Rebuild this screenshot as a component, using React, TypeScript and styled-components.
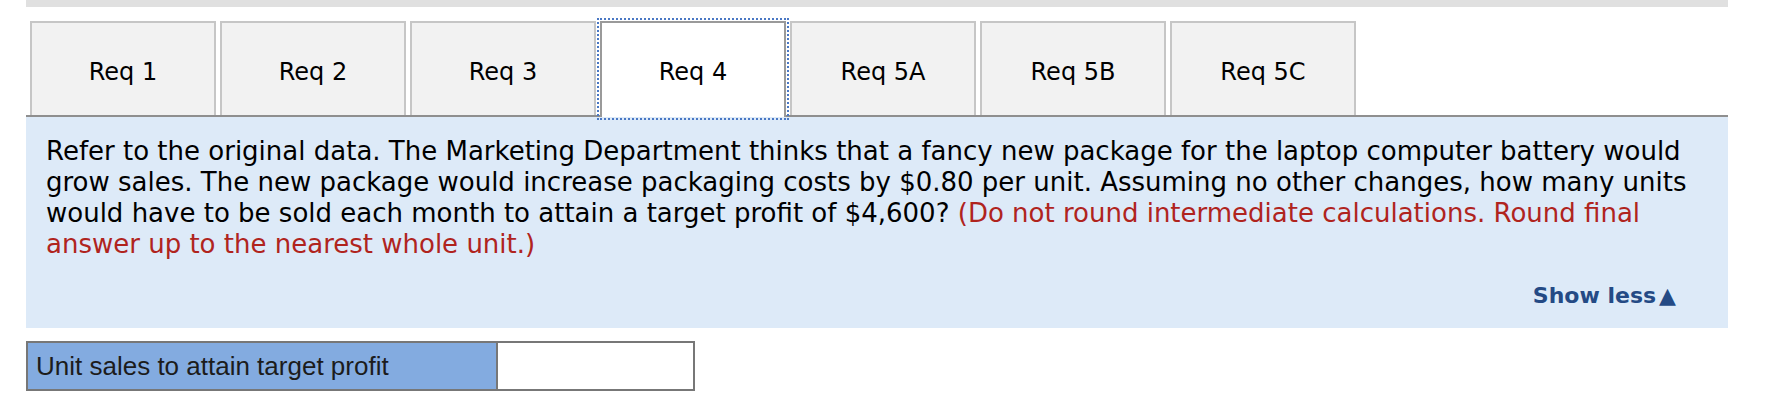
import React, { useState } from 'react';
import styled, { createGlobalStyle } from 'styled-components';

const GlobalStyle = createGlobalStyle`
  html, body {
    margin: 0;
    padding: 0;
    background: #ffffff;
  }
  body {
    font-family: "DejaVu Sans", Verdana, sans-serif;
    color: #000;
  }
`;

const Page = styled.div`
  width: 1702px;
  margin-left: 26px;
`;

const TopBar = styled.div`
  height: 7px;
  background: #e0e0e0;
`;

const TabStrip = styled.div`
  display: flex;
  gap: 4px;
  margin-top: 14px;
  padding-left: 4px;
  border-bottom: 2px solid #8f8f8f;
  height: 94px;
`;

const Tab = styled.button<{ $active?: boolean }>`
  box-sizing: border-box;
  width: 186px;
  height: ${({ $active }) => ($active ? '96px' : '94px')};
  margin-bottom: ${({ $active }) => ($active ? '-2px' : '0')};
  position: relative;
  z-index: ${({ $active }) => ($active ? 1 : 0)};
  background: ${({ $active }) => ($active ? '#ffffff' : '#f2f2f2')};
  border: 2px solid ${({ $active }) => ($active ? '#9a9a9a' : '#c6c6c6')};
  border-bottom: none;
  outline: ${({ $active }) => ($active ? '2px dotted #4a78c4' : 'none')};
  outline-offset: 1px;
  font-family: "DejaVu Sans", Verdana, sans-serif;
  font-size: 24px;
  color: #000;
  padding: ${({ $active }) => ($active ? '6px 0 2px' : '6px 0 0')};
  cursor: pointer;
`;

const Panel = styled.div`
  background: #ddeaf8;
  padding: 19px 20px 19px 20px;
`;

const Question = styled.p`
  margin: 0;
  font-size: 26px;
  line-height: 31px;
  color: #000;
`;

const Hint = styled.span`
  color: #b0241e;
`;

const ToggleRow = styled.div`
  display: flex;
  justify-content: flex-end;
  margin-top: 22px;
  padding-right: 32px;
`;

const ToggleLink = styled.a`
  font-size: 22px;
  font-weight: bold;
  color: #244a85;
  text-decoration: none;
  line-height: 27px;
  cursor: pointer;
`;

const Arrow = styled.span`
  margin-left: 3px;
`;

const AnswerTable = styled.table`
  margin-top: 13px;
  border-collapse: collapse;
  font-family: "Liberation Sans", Arial, sans-serif;
`;

const LabelCell = styled.td`
  box-sizing: border-box;
  width: 470px;
  height: 48px;
  padding: 0 8px;
  background: #83abe0;
  border: 2px solid #777777;
  font-size: 26px;
  color: #1c1c1c;
`;

const InputCell = styled.td`
  box-sizing: border-box;
  width: 197px;
  padding: 0;
  background: #ffffff;
  border: 2px solid #777777;
`;

const AnswerInput = styled.input`
  width: 100%;
  height: 44px;
  border: none;
  outline: none;
  background: transparent;
  font-size: 22px;
  text-align: right;
  box-sizing: border-box;
  padding: 0 8px;
`;

const tabs = ['Req 1', 'Req 2', 'Req 3', 'Req 4', 'Req 5A', 'Req 5B', 'Req 5C'];

export default function App() {
  const [active, setActive] = useState('Req 4');
  return (
    <>
      <GlobalStyle />
      <Page>
        <TopBar />
        <TabStrip>
          {tabs.map((t) => (
            <Tab key={t} $active={t === active} onClick={() => setActive(t)}>
              {t}
            </Tab>
          ))}
        </TabStrip>
        <Panel>
          <Question>
            Refer to the original data. The Marketing Department thinks that a fancy new package for the
            laptop computer battery would grow sales. The new package would increase packaging costs by
            $0.80 per unit. Assuming no other changes, how many units would have to be sold each month to
            attain a target profit of $4,600?{' '}
            <Hint>(Do not round intermediate calculations. Round final answer up to the nearest whole unit.)</Hint>
          </Question>
          <ToggleRow>
            <ToggleLink>
              Show less<Arrow>▲</Arrow>
            </ToggleLink>
          </ToggleRow>
        </Panel>
        <AnswerTable>
          <tbody>
            <tr>
              <LabelCell>Unit sales to attain target profit</LabelCell>
              <InputCell>
                <AnswerInput type="text" />
              </InputCell>
            </tr>
          </tbody>
        </AnswerTable>
      </Page>
    </>
  );
}
